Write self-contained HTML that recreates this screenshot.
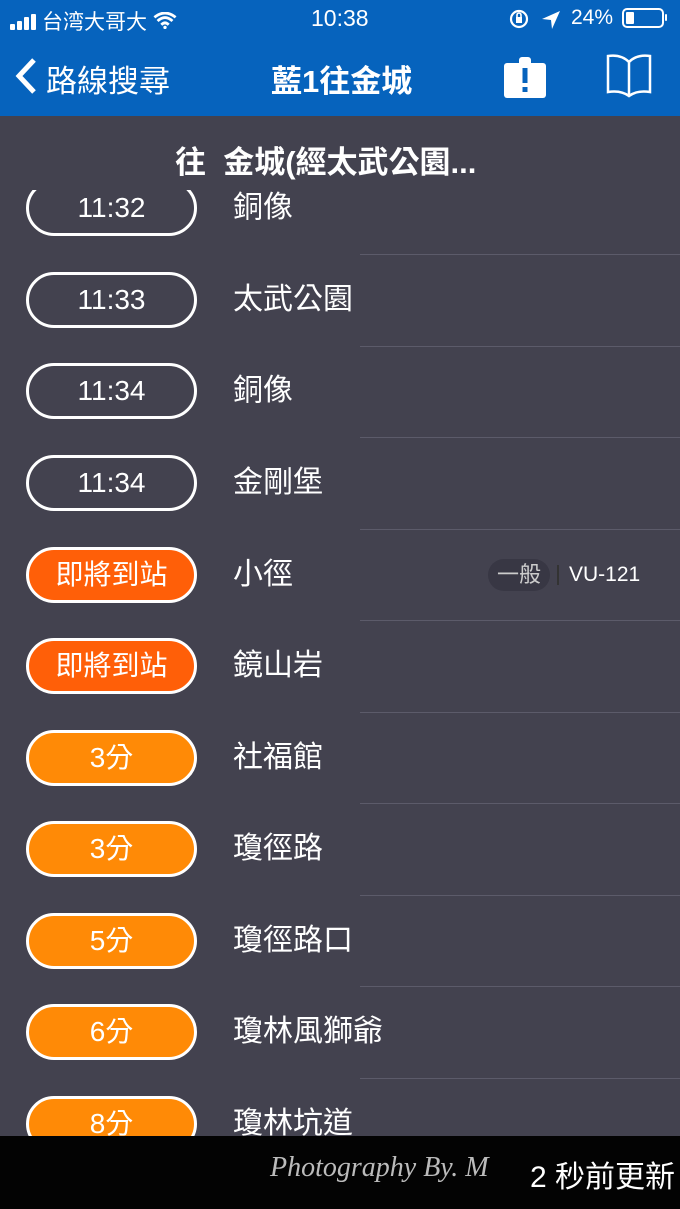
<!DOCTYPE html>
<html><head><meta charset="utf-8"><style>
*{margin:0;padding:0;box-sizing:border-box}
body{width:680px;height:1209px;overflow:hidden;background:#43424f;font-family:"Liberation Sans","Noto Sans CJK TC",sans-serif;color:#fff;position:relative}
.top{position:absolute;left:0;top:0;width:680px;height:116px;background:#0663bd}
.a{position:absolute;white-space:nowrap}
.pill{position:absolute;left:26px;width:171px;height:56px;border:3px solid #fff;border-radius:28px;text-align:center;line-height:50px;font-size:28px}
.st{position:absolute;left:233px;font-size:30px;line-height:40px}
.sep{position:absolute;left:360px;right:0;height:1px;background:#5c5b6a}
.o1{background:#ff5f08}.o2{background:#ff8a06}
</style></head><body>

<div class="pill" style="top:180px">11:32</div><div class="st" style="top:188px">銅像</div><div class="sep" style="top:254px"></div>
<div class="a" style="left:0;top:116px;width:680px;height:74px;background:#43424f"></div>
<div class="top"></div>
<div class="a" style="left:10px;top:6px;font-size:21px">
<svg width="32" height="16" style="vertical-align:-1px"><rect x="0" y="10" width="5" height="6" rx="1" fill="#fff"/><rect x="7" y="7" width="5" height="9" rx="1" fill="#fff"/><rect x="14" y="3" width="5" height="13" rx="1" fill="#fff"/><rect x="21" y="0" width="5" height="16" rx="1" fill="#fff"/></svg>台湾大哥大 <svg width="24" height="17" viewBox="0 0 22 16"><path d="M1 5Q11-3 21 5M4 8.5Q11 2 18 8.5M7.5 12Q11 8.5 14.5 12" stroke="#fff" stroke-width="2.6" fill="none"/><circle cx="11" cy="14.5" r="1.6" fill="#fff"/></svg></div>
<div class="a" style="left:311px;top:5px;font-size:23px">10:38</div>
<svg class="a" style="left:508px;top:8px" width="56" height="22"><circle cx="11" cy="11" r="8" stroke="#fff" stroke-width="2.2" fill="none"/><rect x="8" y="9" width="6" height="6" fill="#fff"/><path d="M9 9V7a2 2 0 0 1 4 0v2" stroke="#fff" stroke-width="1.6" fill="none"/><path d="M52 3L34 11L43 12L44 21Z" fill="#fff"/></svg>
<div class="a" style="left:571px;top:6px;font-size:21px">24%</div>
<span class="a" style="left:622px;top:8px;width:42px;height:20px;border:2px solid #fff;border-radius:5px"><span style="position:absolute;left:2px;top:2px;width:8px;height:12px;background:#fff;border-radius:1px"></span></span>
<span class="a" style="left:665px;top:14px;width:2px;height:7px;background:#fff;border-radius:1px"></span>
<svg class="a" style="left:14px;top:57px" width="26" height="38"><path d="M20 3L5 19L20 35" stroke="#fff" stroke-width="5" fill="none"/></svg>
<div class="a" style="left:46px;top:56px;font-size:31px">路線搜尋</div>
<div class="a" style="left:271px;top:56px;font-size:31px;font-weight:bold">藍1往金城</div>
<svg class="a" style="left:503px;top:52px" width="44" height="46"><rect x="1" y="11" width="42" height="35" rx="3" fill="#fff"/><rect x="16" y="5" width="12" height="10" rx="3" fill="#fff"/><rect x="19.5" y="16" width="5" height="15" fill="#0663bd"/><rect x="19.5" y="35" width="5" height="5" fill="#0663bd"/></svg>
<svg class="a" style="left:604px;top:52px" width="50" height="46"><path d="M25 44V10Q17 2 4 4V40Q17 38 25 44Q33 38 46 40V4Q33 2 25 10" stroke="#fff" stroke-width="2.5" fill="none"/></svg>
<div class="a" style="left:175px;top:137px;font-size:31px;font-weight:bold">往&nbsp;&nbsp;金城(經太武公園...</div>

<div class="pill" style="top:272px">11:33</div><div class="st" style="top:280px">太武公園</div><div class="sep" style="top:346px"></div>
<div class="pill" style="top:363px">11:34</div><div class="st" style="top:371px">銅像</div><div class="sep" style="top:437px"></div>
<div class="pill" style="top:455px">11:34</div><div class="st" style="top:463px">金剛堡</div><div class="sep" style="top:529px"></div>
<div class="pill o1" style="top:547px">即將到站</div><div class="st" style="top:555px">小徑</div>
<div class="a" style="left:488px;top:559px;width:62px;height:32px;border-radius:16px;background:#383744;color:#ccc;font-size:22px;text-align:center;line-height:32px">一般</div>
<div class="a" style="left:557px;top:565px;width:2px;height:20px;background:#333"></div>
<div class="a" style="left:569px;top:563px;font-size:21px">VU-121</div>
<div class="sep" style="top:620px"></div>
<div class="pill o1" style="top:638px">即將到站</div><div class="st" style="top:646px">鏡山岩</div><div class="sep" style="top:712px"></div>
<div class="pill o2" style="top:730px">3分</div><div class="st" style="top:738px">社福館</div><div class="sep" style="top:803px"></div>
<div class="pill o2" style="top:821px">3分</div><div class="st" style="top:829px">瓊徑路</div><div class="sep" style="top:895px"></div>
<div class="pill o2" style="top:913px">5分</div><div class="st" style="top:921px">瓊徑路口</div><div class="sep" style="top:986px"></div>
<div class="pill o2" style="top:1004px">6分</div><div class="st" style="top:1012px">瓊林風獅爺</div><div class="sep" style="top:1078px"></div>
<div class="pill o2" style="top:1096px">8分</div><div class="st" style="top:1104px">瓊林坑道</div>
<div class="a" style="left:0;top:1136px;width:680px;height:73px;background:#030303"></div>
<div class="a" style="left:270px;top:1152px;font-size:28px;font-family:'Liberation Serif',serif;font-style:italic;color:#bbb">Photography By. M</div>
<div class="a" style="left:530px;top:1152px;font-size:30px">2 秒前更新</div>
</body></html>
